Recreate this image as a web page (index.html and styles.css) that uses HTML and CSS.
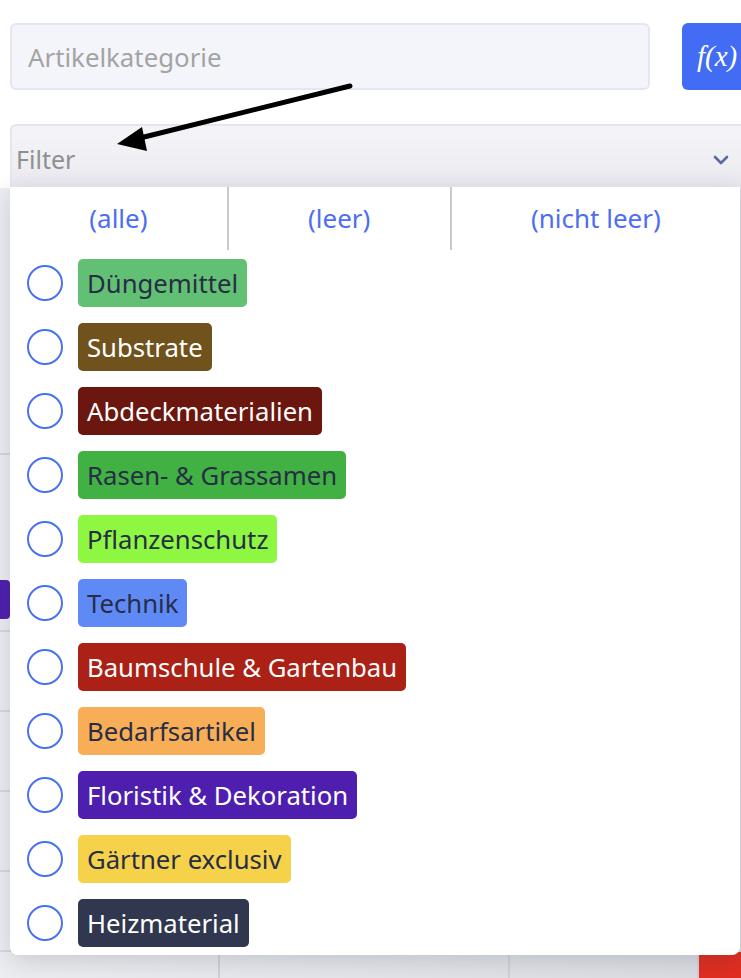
FILE: index.html
```html
<!DOCTYPE html>
<html>

<head>
    <meta name="viewport" content="width=device-width, initial-scale=1.0">
    <title>Artikelkategorie Filter</title>
    <link rel="stylesheet" href="styles.css">
</head>

<body>

    <div class="toolbar">
        <input class="field" placeholder="Artikelkategorie" />
        <button class="fx">f(x)</button>
    </div>

    <div class="filter">
        <span class="filter-label">Filter</span>
        <svg class="chevron" width="16" height="10" viewBox="0 0 16 10">
            <path d="M2 2 L8 8 L14 2" fill="none" stroke="#5b6b9b" stroke-width="2.6" stroke-linecap="round" stroke-linejoin="round" />
        </svg>
    </div>

    <div class="table">
        <div class="row head"></div>
        <div class="row tall"><span class="chip"></span></div>
        <div class="row"></div>
        <div class="row"></div>
        <div class="row"></div>
        <div class="row"></div>
        <div class="row last">
            <span class="cell c1"></span>
            <span class="cell c2"></span>
            <span class="cell c3"></span>
            <span class="cell red"></span>
        </div>
    </div>

    <div class="dropdown">
        <div class="quick">
            <span>(alle)</span>
            <span>(leer)</span>
            <span>(nicht leer)</span>
        </div>
        <ul class="options">
            <li><span class="radio"></span><span class="tag dark" style="background:#62c074">Düngemittel</span></li>
            <li><span class="radio"></span><span class="tag" style="background:#70531c">Substrate</span></li>
            <li><span class="radio"></span><span class="tag" style="background:#6b160e">Abdeckmaterialien</span></li>
            <li><span class="radio"></span><span class="tag dark" style="background:#40b142">Rasen- &amp; Grassamen</span></li>
            <li><span class="radio"></span><span class="tag dark" style="background:#8ef742">Pflanzenschutz</span></li>
            <li><span class="radio"></span><span class="tag dark" style="background:#5f8af6">Technik</span></li>
            <li><span class="radio"></span><span class="tag" style="background:#ab2116">Baumschule &amp; Gartenbau</span></li>
            <li><span class="radio"></span><span class="tag dark" style="background:#f8ad57">Bedarfsartikel</span></li>
            <li><span class="radio"></span><span class="tag" style="background:#4e1fae">Floristik &amp; Dekoration</span></li>
            <li><span class="radio"></span><span class="tag dark" style="background:#f6d24b">Gärtner exclusiv</span></li>
            <li><span class="radio"></span><span class="tag" style="background:#31374e">Heizmaterial</span></li>
        </ul>
    </div>

    <svg class="pointer" width="741" height="200" viewBox="0 0 741 200">
        <line x1="350" y1="86" x2="136" y2="139" stroke="#000" stroke-width="5" stroke-linecap="round" />
        <polygon points="117,144 142,127 147,151" fill="#000" />
    </svg>

</body>

</html>
```

FILE: styles.css
```css
body {
    margin: 0;
    background: #fff;
    font-family: "Noto Sans", "Open Sans", sans-serif;
    position: relative;
    height: 978px;
    overflow: hidden;
}

.toolbar {
    display: flex;
    gap: 32px;
    padding: 23px 0 0 10px;
}

.field {
    flex: none;
    box-sizing: border-box;
    width: 640px;
    height: 67px;
    border: 2px solid #e4e6f0;
    border-radius: 6px;
    background: #f4f5fa;
    padding: 0 16px;
    font-family: inherit;
    font-size: 25.8px;
    color: #333;
}

.field::placeholder {
    color: #a3a3a3;
}

.fx {
    flex: none;
    width: 80px;
    height: 67px;
    border: none;
    border-radius: 6px;
    background: #436cf4;
    color: #fff;
    font-family: "Liberation Serif", serif;
    font-style: italic;
    font-size: 29px;
    text-align: left;
    padding: 0 0 0 15px;
}

.filter {
    display: flex;
    align-items: center;
    justify-content: space-between;
    box-sizing: border-box;
    height: 64px;
    margin: 34px 0 0 10px;
    padding: 4px 12px 0 4px;
    border-top: 2px solid #e4e6ef;
    border-left: 2px solid #e4e6ef;
    border-top-left-radius: 6px;
    background: linear-gradient(#f5f5f9, #e9e9ef);
}

.filter-label {
    font-size: 25px;
    color: #8f8f8f;
}

.chevron {
    margin-top: 2px;
}

.table {
    background: linear-gradient(90deg, #eceef2, #dadce2);
}

.table .row {
    height: 80px;
    border-bottom: 2px solid #d6d8e0;
    box-sizing: border-box;
}

.table .head {
    height: 267px;
}

.table .tall {
    height: 177px;
    display: flex;
    align-items: flex-end;
    padding-bottom: 11px;
}

.chip {
    width: 40px;
    height: 39px;
    margin-left: -30px;
    background: #4e1fae;
    border-radius: 4px;
}

.table .last {
    display: flex;
    height: 26px;
    border-bottom: none;
}

.cell {
    border-right: 2px solid #cfd2dc;
}

.c1 {
    width: 218px;
}

.c2 {
    width: 288px;
}

.c3 {
    width: 187px;
}

.red {
    flex: 1;
    border: none;
    background: #e02e20;
}

.dropdown {
    position: absolute;
    top: 187px;
    left: 10px;
    right: 1px;
    height: 768px;
    box-sizing: border-box;
    background: #fff;
    border-radius: 0 0 8px 8px;
    box-shadow: 0 6px 24px rgba(40, 44, 60, 0.18);
}

.quick {
    display: flex;
    height: 63px;
}

.quick span {
    flex: 1 1 auto;
    display: flex;
    align-items: center;
    justify-content: center;
    font-size: 26px;
    color: #4d6ef2;
    padding-bottom: 2px;
}

.quick span+span {
    border-left: 2px solid #c9c9c9;
}

.options {
    list-style: none;
    margin: 0;
    padding: 9px 0 0 17px;
}

.options li {
    display: flex;
    align-items: center;
    gap: 15px;
    height: 48px;
    margin-bottom: 16px;
}

.radio {
    box-sizing: border-box;
    width: 36px;
    height: 36px;
    border: 2px solid #4a72f0;
    border-radius: 50%;
}

.tag {
    display: flex;
    align-items: center;
    height: 48px;
    padding: 0 9px;
    border-radius: 5px;
    font-size: 25.7px;
    color: #fff;
}

.tag.dark {
    color: #272d45;
}

.pointer {
    position: absolute;
    top: 0;
    left: 0;
}
```
